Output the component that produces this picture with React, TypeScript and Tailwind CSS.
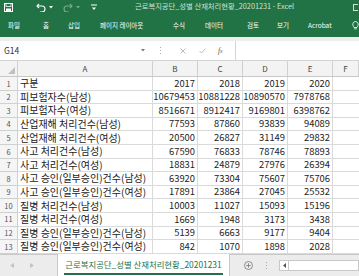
import React from "react";

const rows: [string, string, string, string, string][] = [
  ["구분", "2017", "2018", "2019", "2020"],
  ["피보험자수(남성)", "10679453", "10881228", "10890570", "7978768"],
  ["피보험자수(여성)", "8516671", "8912417", "9169801", "6398762"],
  ["산업재해 처리건수(남성)", "77593", "87860", "93839", "94089"],
  ["산업재해 처리건수(여성)", "20500", "26827", "31149", "29832"],
  ["사고 처리건수(남성)", "67590", "76833", "78746", "78893"],
  ["사고 처리건수(여성)", "18831", "24879", "27976", "26394"],
  ["사고 승인(일부승인)건수(남성)", "63920", "73304", "75607", "75706"],
  ["사고 승인(일부승인)건수(여성)", "17891", "23864", "27045", "25532"],
  ["질병 처리건수(남성)", "10003", "11027", "15093", "15196"],
  ["질병 처리건수(여성)", "1669", "1948", "3173", "3438"],
  ["질병 승인(일부승인)건수(남성)", "5139", "6663", "9177", "9404"],
  ["질병 승인(일부승인)건수(여성)", "842", "1070", "1898", "2028"],
];

const tabs: [string, string][] = [
  ["파일", "w-[35px]"],
  ["홈", "w-[25px]"],
  ["삽입", "w-[32px]"],
  ["페이지 레이아웃", "w-[73px]"],
  ["수식", "w-[32px]"],
  ["데이터", "w-[42px]"],
  ["검토", "w-[30px]"],
  ["보기", "w-[31px]"],
  ["Acrobat", "w-[44px]"],
];

export default function App() {
  return (
    <div className="w-[359px] h-[276px] overflow-hidden bg-white flex flex-col font-['Noto_Sans_CJK_KR','Noto_Sans',sans-serif]">
      {/* Title bar */}
      <div className="h-[14px] bg-[#217346] flex items-center shrink-0">
        <svg className="ml-[4px]" width="9" height="9" viewBox="0 0 9 9">
          <rect x="0.5" y="0.5" width="8" height="8" fill="none" stroke="white" strokeWidth="1" />
          <rect x="2" y="0.5" width="5" height="3" fill="none" stroke="white" strokeWidth="0.8" />
          <rect x="2" y="5.5" width="5" height="3" fill="white" />
        </svg>
        <svg className="ml-[23px]" width="10" height="9" viewBox="0 0 10 9">
          <path d="M3 1 L1 3 L3 5" fill="none" stroke="white" strokeWidth="1.1" />
          <path d="M1 3 H6 A3 3 0 0 1 6 9 H4" fill="none" stroke="white" strokeWidth="1.1" />
        </svg>
        <svg className="ml-[3px]" width="4" height="3" viewBox="0 0 4 3">
          <path d="M0 0 H4 L2 2.5 Z" fill="white" />
        </svg>
        <svg className="ml-[10px]" width="10" height="9" viewBox="0 0 10 9" opacity="0.4">
          <path d="M7 1 L9 3 L7 5" fill="none" stroke="white" strokeWidth="1.1" />
          <path d="M9 3 H4 A3 3 0 0 0 4 9 H6" fill="none" stroke="white" strokeWidth="1.1" />
        </svg>
        <svg className="ml-[3px]" width="4" height="3" viewBox="0 0 4 3" opacity="0.4">
          <path d="M0 0 H4 L2 2.5 Z" fill="white" />
        </svg>
        <svg className="ml-[11px]" width="6" height="7" viewBox="0 0 6 7">
          <rect x="0" y="0.5" width="6" height="1" fill="white" />
          <path d="M1 3.5 H5 L3 6 Z" fill="white" />
        </svg>
        <div className="ml-[38px] text-[7.3px] leading-none text-[#cde2d4] whitespace-nowrap">
          근로복지공단_성별 산재처리현황_20201231 - Excel
        </div>
        <div className="ml-auto mr-[1px] w-[5px] h-[7px] border border-[#cde2d4] border-r-0" />
      </div>

      {/* Ribbon tabs */}
      <div className="h-[23px] bg-[#217346] flex items-center pl-[8px] shrink-0 text-white text-[6.5px] leading-none">
        {tabs.map(([t, w]) => (
          <div key={t} className={`${w} whitespace-nowrap`}>
            {t}
          </div>
        ))}
        <svg width="7" height="9" viewBox="0 0 7 9">
          <path d="M3.5 0.5 A3 3 0 0 1 5.5 5.5 L5 6.5 H2 L1.5 5.5 A3 3 0 0 1 3.5 0.5 Z" fill="none" stroke="white" strokeWidth="0.8" />
          <path d="M2.2 7.8 H4.8" stroke="white" strokeWidth="0.8" />
        </svg>
      </div>

      {/* Formula bar */}
      <div className="bg-[#eeeeee] pt-[4px] shrink-0">
        <div className="h-[20px] bg-white flex items-center border-b border-[#d4d4d4]">
          <div className="w-[150px] h-full flex items-center pl-[4px] text-[8.5px] text-[#333] relative">
            G14
            <svg className="ml-auto mr-[5px]" width="4" height="3" viewBox="0 0 4 3">
              <path d="M0 0 H4 L2 2.5 Z" fill="#777" />
            </svg>
          </div>
          <div className="w-[20px] h-full flex flex-col items-center justify-center gap-[2px]">
            <div className="w-[1px] h-[1px] bg-[#aaa]" />
            <div className="w-[1px] h-[1px] bg-[#aaa]" />
            <div className="w-[1px] h-[1px] bg-[#aaa]" />
          </div>
          <div className="w-[65px] h-full flex items-center">
            <svg className="ml-[10px]" width="6" height="6" viewBox="0 0 6 6">
              <path d="M0.5 0.5 L5.5 5.5 M5.5 0.5 L0.5 5.5" stroke="#b5b5b5" strokeWidth="0.9" />
            </svg>
            <svg className="ml-[13px]" width="7" height="6" viewBox="0 0 7 6">
              <path d="M0.5 3 L2.5 5 L6.5 0.5" fill="none" stroke="#b5b5b5" strokeWidth="0.9" />
            </svg>
            <span className="ml-[12px] text-[7.5px] italic text-[#555] font-['Liberation_Serif',serif] leading-none">
              f<span className="text-[5.5px]">x</span>
            </span>
          </div>
          <div className="w-[1px] h-full bg-[#d4d4d4]" />
          <div className="flex-1 h-full" />
        </div>
      </div>

      {/* Grid */}
      <div className="flex flex-col shrink-0">
        <div className="h-[16px] flex bg-[#f3f3f3] border-b border-[#c8c8c8] text-[8px] text-[#444]">
          <div className="w-[18px] h-full border-r border-[#d0d0d0] relative">
            <svg className="absolute right-[2px] bottom-[2px]" width="7" height="7" viewBox="0 0 7 7">
              <path d="M7 0 V7 H0 Z" fill="#c0c0c0" />
            </svg>
          </div>
          {[
            ["A", "w-[135px]"],
            ["B", "w-[45px]"],
            ["C", "w-[45px]"],
            ["D", "w-[45px]"],
            ["E", "w-[45px]"],
            ["F", "flex-1"],
          ].map(([l, w]) => (
            <div key={l} className={`${w} h-full border-r border-[#d0d0d0] flex items-center justify-center`}>
              {l}
            </div>
          ))}
        </div>
        {rows.map((r, i) => (
          <div key={i} className="h-[13.6px] flex text-[9.4px] text-[#222] leading-none">
            <div className="w-[18px] h-full bg-[#f5f5f5] border-r border-b border-[#d0d0d0] flex items-center justify-center text-[7.5px] text-[#555]">
              {i + 1}
            </div>
            <div className="w-[135px] h-full border-r border-b border-[#dadada] flex items-center pl-[2px] whitespace-nowrap text-[10px]">
              {r[0]}
            </div>
            {r.slice(1).map((v, j) => (
              <div key={j} className="w-[45px] h-full border-r border-b border-[#dadada] flex items-center justify-end pr-[2px]">
                {v}
              </div>
            ))}
            <div className="flex-1 h-full border-b border-[#dadada]" />
          </div>
        ))}
      </div>

      {/* Sheet tabs */}
      <div className="flex-1 bg-[#ececec] flex border-t border-[#c8c8c8]">
        <div className="w-[57px] flex items-center">
          <svg className="ml-[10px]" width="4" height="5" viewBox="0 0 4 5">
            <path d="M4 0 V5 L0 2.5 Z" fill="#c4c4c4" />
          </svg>
          <svg className="ml-[16px]" width="4" height="5" viewBox="0 0 4 5">
            <path d="M0 0 V5 L4 2.5 Z" fill="#c4c4c4" />
          </svg>
        </div>
        <div className="w-[173px] bg-white border-x border-[#c8c8c8] -mt-[1px] flex items-center justify-center relative">
          <span className="text-[8.4px] text-[#217346] whitespace-nowrap leading-none mb-[2px]">
            근로복지공단_성별 산재처리현황_20201231
          </span>
          <div className="absolute left-[6px] right-[6px] bottom-[1px] h-[2px] bg-[#217346]" />
        </div>
        <div className="w-[23px] flex items-center justify-end">
          <svg width="9" height="9" viewBox="0 0 9 9">
            <circle cx="4.5" cy="4.5" r="4" fill="none" stroke="#777" strokeWidth="0.8" />
            <path d="M4.5 2.3 V6.7 M2.3 4.5 H6.7" stroke="#777" strokeWidth="0.8" />
          </svg>
        </div>
        <div className="w-[26px] flex flex-col items-center justify-center gap-[2px]">
          <div className="w-[1px] h-[1px] bg-[#aaa]" />
          <div className="w-[1px] h-[1px] bg-[#aaa]" />
          <div className="w-[1px] h-[1px] bg-[#aaa]" />
        </div>
        <div className="flex-1 flex items-center">
          <div className="flex-1 h-[11px] bg-white border border-[#c8c8c8] flex">
            <div className="w-[9px] h-full border-r border-[#c8c8c8] flex items-center justify-center">
              <svg width="3" height="5" viewBox="0 0 3 5">
                <path d="M3 0 V5 L0 2.5 Z" fill="#555" />
              </svg>
            </div>
          </div>
        </div>
      </div>
    </div>
  );
}
